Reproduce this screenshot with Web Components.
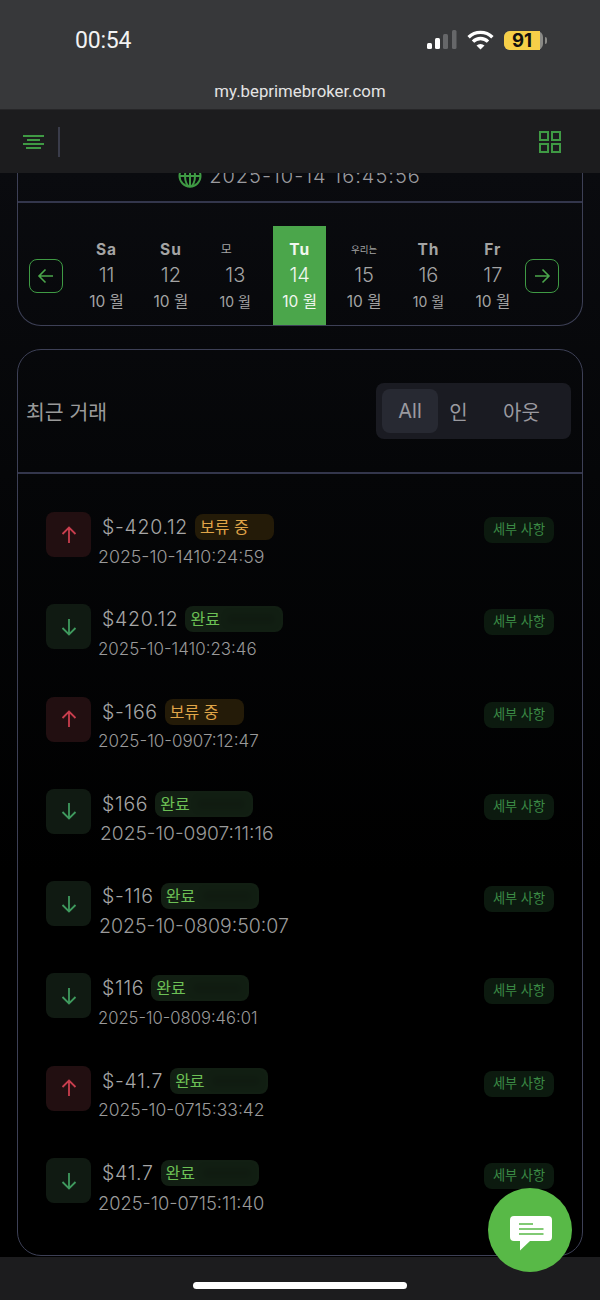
<!DOCTYPE html>
<html lang="ko">
<head>
<meta charset="utf-8">
<title>my.beprimebroker.com</title>
<style>
	html, body {
		margin: 0;
		height: 1300px;
		overflow: hidden;
		background: #000;
		font-family: Inter, "Noto Sans CJK KR", sans-serif;
	}
	body {
		display: flex;
		flex-direction: column;
		position: relative;
	}
	main {
		flex: 1;
		min-height: 0;
		display: flex;
		flex-direction: column;
		gap: 23px;
		padding: 0 17px 1px;
		background: linear-gradient(#0a0b0f 0, #050608 300px, #000 700px);
	}
	.small { --name-size: 12px; --name-weight: 400; --name-shift: -9px; --name-spacing: 0; }
	.tiny { --name-size: 9.5px; --name-weight: 400; --name-spacing: 0; }
	.thin { --month-size: 14px; }
</style>
</head>
<body>

<status-bar time="00:54" url="my.beprimebroker.com" battery="91"></status-bar>
<app-header></app-header>

<main>
	<week-card stamp="2025-10-14 16:45:56">
		<day-cell><span slot="name">Sa</span><span slot="day">11</span><span slot="month">10 월</span></day-cell>
		<day-cell><span slot="name">Su</span><span slot="day">12</span><span slot="month">10 월</span></day-cell>
		<day-cell class="small thin"><span slot="name">모</span><span slot="day">13</span><span slot="month">10 월</span></day-cell>
		<day-cell active><span slot="name">Tu</span><span slot="day">14</span><span slot="month">10 월</span></day-cell>
		<day-cell class="tiny"><span slot="name">우리는</span><span slot="day">15</span><span slot="month">10 월</span></day-cell>
		<day-cell class="thin"><span slot="name">Th</span><span slot="day">16</span><span slot="month">10 월</span></day-cell>
		<day-cell><span slot="name">Fr</span><span slot="day">17</span><span slot="month">10 월</span></day-cell>
	</week-card>

	<tx-panel heading="최근 거래">
		<tx-row dir="up" tone="pending" style="--date-size:17.8px">
			<span slot="amount">$-420.12</span><span slot="status">보류 중</span><span slot="date">2025-10-1410:24:59</span>
		</tx-row>
		<tx-row dir="down" tone="done" style="--date-size:16.9px">
			<span slot="amount">$420.12</span><span slot="status">완료</span><span slot="date">2025-10-1410:23:46</span>
		</tx-row>
		<tx-row dir="up" tone="pending" style="--date-size:17px">
			<span slot="amount">$-166</span><span slot="status">보류 중</span><span slot="date">2025-10-0907:12:47</span>
		</tx-row>
		<tx-row dir="down" tone="done" style="--date-size:19.2px;--date-shift:2px">
			<span slot="amount">$166</span><span slot="status">완료</span><span slot="date">2025-10-0907:11:16</span>
		</tx-row>
		<tx-row dir="down" tone="done" style="--date-size:19.5px;--date-shift:1px">
			<span slot="amount">$-116</span><span slot="status">완료</span><span slot="date">2025-10-0809:50:07</span>
		</tx-row>
		<tx-row dir="down" tone="done" style="--date-size:16.6px">
			<span slot="amount">$116</span><span slot="status">완료</span><span slot="date">2025-10-0809:46:01</span>
		</tx-row>
		<tx-row dir="up" tone="done" style="--date-size:17.5px">
			<span slot="amount">$-41.7</span><span slot="status">완료</span><span slot="date">2025-10-0715:33:42</span>
		</tx-row>
		<tx-row dir="down" tone="done" style="--date-size:18.3px">
			<span slot="amount">$41.7</span><span slot="status">완료</span><span slot="date">2025-10-0715:11:40</span>
		</tx-row>
	</tx-panel>
</main>

<home-bar></home-bar>
<chat-fab></chat-fab>

<script>
class StatusBar extends HTMLElement {

	constructor() {
		super();
		this.attachShadow({ mode: 'open' });
		this.shadowRoot.innerHTML = `
			<style>
				:host {
					display: block;
					height: 110px;
					box-sizing: border-box;
					background: #37383a;
					border-bottom: 1px solid #262628;
					color: #f2f2f2;
					font-family: Roboto, sans-serif;
				}
				.top {
					height: 81px;
					display: flex;
					align-items: center;
					padding: 0 53px 0 75px;
					box-sizing: border-box;
				}
				.time {
					font-size: 23px;
					flex: 1;
					letter-spacing: -.2px;
				}
				.icons {
					display: flex;
					align-items: center;
					gap: 10px;
					margin-top: -1px;
				}
				.url {
					text-align: center;
					font-size: 16.8px;
					line-height: 20px;
					color: #e4e4e4;
				}
				.battery {
					position: relative;
					width: 39px;
					height: 19px;
					border-radius: 6px;
					background: #8a8a86;
					color: #111;
					font: 700 18.5px/19px Inter, sans-serif;
					text-align: center;
				}
				.battery i {
					position: absolute;
					inset: 0 3px 0 0;
					border-radius: 6px 0 0 6px;
					background: #f6cf48;
				}
				.battery b {
					position: relative;
					font-weight: 700;
					margin-right: 3px;
				}
				.tip {
					width: 2px;
					height: 7px;
					margin-left: -8px;
					border-radius: 0 2px 2px 0;
					background: #8a8a86;
				}
			</style>
			<div class="top">
				<span class="time">${this.getAttribute('time')}</span>
				<div class="icons">
					<svg width="30" height="20" viewBox="0 0 30 20">
						<rect x="0" y="13" width="5" height="6" rx="1.5" fill="#fff"/>
						<rect x="8" y="8" width="5" height="11" rx="1.5" fill="#fff"/>
						<rect x="16" y="4" width="5" height="15" rx="1.5" fill="#666769"/>
						<rect x="25" y="0" width="4.5" height="19" rx="1.5" fill="#666769"/>
					</svg>
					<svg width="27" height="20" viewBox="0 0 27 20" fill="none" stroke="#fff" stroke-width="3.4">
						<path d="M1.6 7.2a17 17 0 0 1 23.8 0"/>
						<path d="M6 11.6a10.6 10.6 0 0 1 15 0"/>
						<path d="M13.5 19.6l-4-4a5.6 5.6 0 0 1 8 0z" fill="#fff" stroke="none"/>
					</svg>
					<div class="battery"><i></i><b>${this.getAttribute('battery')}</b></div>
					<div class="tip"></div>
				</div>
			</div>
			<div class="url">${this.getAttribute('url')}</div>
		`;
	}

}

class AppHeader extends HTMLElement {

	constructor() {
		super();
		this.attachShadow({ mode: 'open' });
		this.shadowRoot.innerHTML = `
			<style>
				:host {
					display: flex;
					align-items: center;
					position: relative;
					z-index: 1;
					height: 63px;
					padding: 0 39px 0 23px;
					background: #1c1c1e;
				}
				.divider {
					width: 1.5px;
					height: 30px;
					margin-left: 13px;
					background: #3a3c4a;
				}
				.space { flex: 1; }
			</style>
			<svg width="22" height="16" viewBox="0 0 22 16" stroke="#3f9a44" stroke-width="2">
				<path d="M0 2h21M4 6h13M0 10h21M3 14h15"/>
			</svg>
			<div class="divider"></div>
			<div class="space"></div>
			<svg width="22" height="22" viewBox="0 0 22 22" fill="none" stroke="#3f9a44" stroke-width="2">
				<rect x="1" y="1" width="8" height="8"/>
				<rect x="13" y="1" width="8" height="8"/>
				<rect x="1" y="13" width="8" height="8"/>
				<rect x="13" y="13" width="8" height="8"/>
			</svg>
		`;
	}

}

class DayCell extends HTMLElement {

	constructor() {
		super();
		this.attachShadow({ mode: 'open' });
		this.shadowRoot.innerHTML = `
			<style>
				:host {
					display: flex;
					flex-direction: column;
					align-items: center;
					width: 53px;
					height: 99px;
					color: #a4a4a4;
				}
				:host([active]) {
					background: #4ba64b;
					color: #f1f7ef;
				}
				.name {
					height: 23px;
					margin-top: 12px;
					transform: translateX(var(--name-shift, 0));
					font-size: var(--name-size, 15.5px);
					font-weight: var(--name-weight, 700);
					letter-spacing: var(--name-spacing, 1px);
					line-height: 24px;
				}
				.day {
					font-size: 20px;
					font-weight: 300;
					line-height: 28px;
				}
				.month {
					margin-top: 1px;
					font-size: var(--month-size, 15.5px);
					line-height: 24px;
					white-space: nowrap;
				}
			</style>
			<div class="name"><slot name="name"></slot></div>
			<div class="day"><slot name="day"></slot></div>
			<div class="month"><slot name="month"></slot></div>
		`;
	}

}

class WeekCard extends HTMLElement {

	constructor() {
		super();
		this.attachShadow({ mode: 'open' });
		this.shadowRoot.innerHTML = `
			<style>
				:host {
					display: block;
					height: 153px;
					box-sizing: border-box;
					border: 1.5px solid #3d4056;
					border-top: 0;
					border-radius: 0 0 24px 24px;
				}
				.clock {
					height: 30px;
					box-sizing: border-box;
					border-bottom: 2px solid #33364c;
					overflow: hidden;
				}
				.stamp {
					display: flex;
					align-items: center;
					justify-content: center;
					gap: 7px;
					height: 42px;
					margin-top: -18px;
					padding-right: 1px;
					color: #9a9a9e;
					font-size: 20px;
					font-weight: 300;
					letter-spacing: 1px;
				}
				.week {
					display: flex;
					align-items: center;
					padding: 23px 22px 0 11px;
				}
				.days {
					display: flex;
					gap: 11.4px;
					margin: 0 6px 0 17px;
				}
				.nav {
					flex: none;
					display: grid;
					place-items: center;
					width: 34px;
					height: 34px;
					box-sizing: border-box;
					margin-top: 1px;
					border: 1.5px solid #3f9a44;
					border-radius: 8px;
				}
			</style>
			<div class="clock">
				<div class="stamp">
					<svg width="24" height="24" viewBox="0 0 24 24" fill="none" stroke="#3f9a44" stroke-width="2">
						<circle cx="12" cy="12" r="10.5"/>
						<ellipse cx="12" cy="12" rx="5" ry="10.5"/>
						<path d="M12 1.5v21M1.5 12h21"/>
					</svg>
					<span>${this.getAttribute('stamp')}</span>
				</div>
			</div>
			<div class="week">
				<div class="nav">
					<svg width="20" height="20" viewBox="0 0 20 20" fill="none" stroke="#4ba64b" stroke-width="1.6">
						<path d="M17 10H3M9.5 3.5L3 10l6.500 6.500"/>
					</svg>
				</div>
				<div class="days"><slot></slot></div>
				<div class="nav">
					<svg width="20" height="20" viewBox="0 0 20 20" fill="none" stroke="#4ba64b" stroke-width="1.6">
						<path d="M3 10h14M10.500 3.500L17 10l-6.500 6.500"/>
					</svg>
				</div>
			</div>
		`;
	}

}

class TxPanel extends HTMLElement {

	constructor() {
		super();
		this.attachShadow({ mode: 'open' });
		this.shadowRoot.innerHTML = `
			<style>
				:host {
					display: block;
					flex: 1;
					min-height: 0;
					box-sizing: border-box;
					border: 1.5px solid #3d4056;
					border-radius: 24px;
				}
				.head {
					display: flex;
					align-items: center;
					justify-content: space-between;
					height: 124px;
					box-sizing: border-box;
					padding: 0 11px 0 8px;
					border-bottom: 2px solid #33364c;
				}
				h2 {
					margin: 0;
					color: #9a9a9a;
					font-size: 20.5px;
					font-weight: 400;
				}
				.tabs {
					display: flex;
					align-items: center;
					width: 195px;
					height: 56px;
					box-sizing: border-box;
					padding: 6px;
					background: #1a1b22;
					border-radius: 8px;
					color: #9a9aa0;
					font-size: 20px;
				}
				.tabs span {
					display: grid;
					place-items: center;
					height: 100%;
				}
				.all {
					width: 56px;
					background: #272932;
					border-radius: 8px;
				}
				.in { width: 41px; }
				.out { width: 85px; }
				.list {
					display: flex;
					flex-direction: column;
					gap: 32.3px;
					padding: 38px 28px 0;
				}
			</style>
			<div class="head">
				<h2>${this.getAttribute('heading')}</h2>
				<div class="tabs">
					<span class="all">All</span>
					<span class="in">인</span>
					<span class="out">아웃</span>
				</div>
			</div>
			<div class="list"><slot></slot></div>
		`;
	}

}

class TxRow extends HTMLElement {

	constructor() {
		super();

		const up = this.getAttribute('dir') === 'up';

		this.attachShadow({ mode: 'open' });
		this.shadowRoot.innerHTML = `
			<style>
				:host {
					display: flex;
					height: 60px;
					color: #a6a6a6;
				}
				.icon {
					flex: none;
					display: grid;
					place-items: center;
					width: 45px;
					height: 45px;
					border-radius: 8px;
					background: ${up ? '#220f11' : '#101a12'};
				}
				.info {
					flex: 1;
					padding-top: 2px;
				}
				.line {
					display: flex;
					align-items: center;
					gap: 7px;
					height: 26px;
					margin-left: 11px;
					font-size: 19.5px;
					font-weight: 300;
					letter-spacing: .7px;
				}
				.badge {
					position: relative;
					box-sizing: border-box;
					height: 26px;
					padding: 0 5px;
					border-radius: 8px;
					font-size: 16px;
					font-weight: 400;
					letter-spacing: 0;
					line-height: 26px;
				}
				:host([tone="pending"]) .badge {
					width: 79px;
					background: #241b08;
					color: #e0a548;
				}
				:host([tone="done"]) .badge {
					width: 98px;
					background: #121f13;
					color: #6cc055;
				}
				:host([tone="done"]) .badge::after {
					content: "";
					position: absolute;
					top: 8px;
					right: 8px;
					width: 48px;
					height: 10px;
					background: rgba(0, 0, 0, .12);
					filter: blur(3px);
				}
				.date {
					margin: 4.5px 0 0 calc(7px + var(--date-shift, 0px));
					color: #9a9a9a;
					font-size: var(--date-size, 17px);
					font-weight: 300;
					line-height: 24px;
					white-space: nowrap;
				}
				.more {
					flex: none;
					box-sizing: border-box;
					width: 70px;
					height: 26px;
					margin-top: 5px;
					border-radius: 8px;
					background: #0c1a0f;
					color: #3b8a45;
					font-size: 13.2px;
					line-height: 25px;
					text-align: center;
				}
			</style>
			<div class="icon">
				<svg width="22" height="22" viewBox="0 0 22 22" fill="none" stroke="${up ? '#c93e4e' : '#3f9a5e'}" stroke-width="1.8">
					<path d="${up ? 'M11 19V3.500M4.500 10L11 3.500 17.500 10' : 'M11 3v15.500M4.500 12L11 18.500 17.500 12'}"/>
				</svg>
			</div>
			<div class="info">
				<div class="line">
					<slot name="amount"></slot>
					<span class="badge"><slot name="status"></slot></span>
				</div>
				<div class="date"><slot name="date"></slot></div>
			</div>
			<div class="more">세부 사항</div>
		`;
	}

}

class HomeBar extends HTMLElement {

	constructor() {
		super();
		this.attachShadow({ mode: 'open' });
		this.shadowRoot.innerHTML = `
			<style>
				:host {
					display: flex;
					justify-content: center;
					height: 43px;
					padding-top: 25px;
					box-sizing: border-box;
					background: #1c1c1e;
				}
				div {
					width: 214px;
					height: 7px;
					border-radius: 4px;
					background: #fff;
				}
			</style>
			<div></div>
		`;
	}

}

class ChatFab extends HTMLElement {

	constructor() {
		super();
		this.attachShadow({ mode: 'open' });
		this.shadowRoot.innerHTML = `
			<style>
				:host {
					position: absolute;
					left: 488px;
					top: 1188px;
					display: grid;
					place-items: center;
					width: 84px;
					height: 84px;
					border-radius: 50%;
					background: #58b947;
				}
			</style>
			<svg width="42" height="36" viewBox="0 0 42 36" style="margin:8px 0 0 1px">
				<path d="M4 0h34a4 4 0 0 1 4 4v17a4 4 0 0 1-4 4H20l-10 9.500V25H4a4 4 0 0 1-4-4V4a4 4 0 0 1 4-4z" fill="#fff"/>
				<path d="M9 8h14M9 13h24.500M9 18h24.500" stroke="#58b947" stroke-width="1.700"/>
			</svg>
		`;
	}

}

customElements.define('status-bar', StatusBar);
customElements.define('app-header', AppHeader);
customElements.define('day-cell', DayCell);
customElements.define('week-card', WeekCard);
customElements.define('tx-panel', TxPanel);
customElements.define('tx-row', TxRow);
customElements.define('home-bar', HomeBar);
customElements.define('chat-fab', ChatFab);
</script>
</body>
</html>
